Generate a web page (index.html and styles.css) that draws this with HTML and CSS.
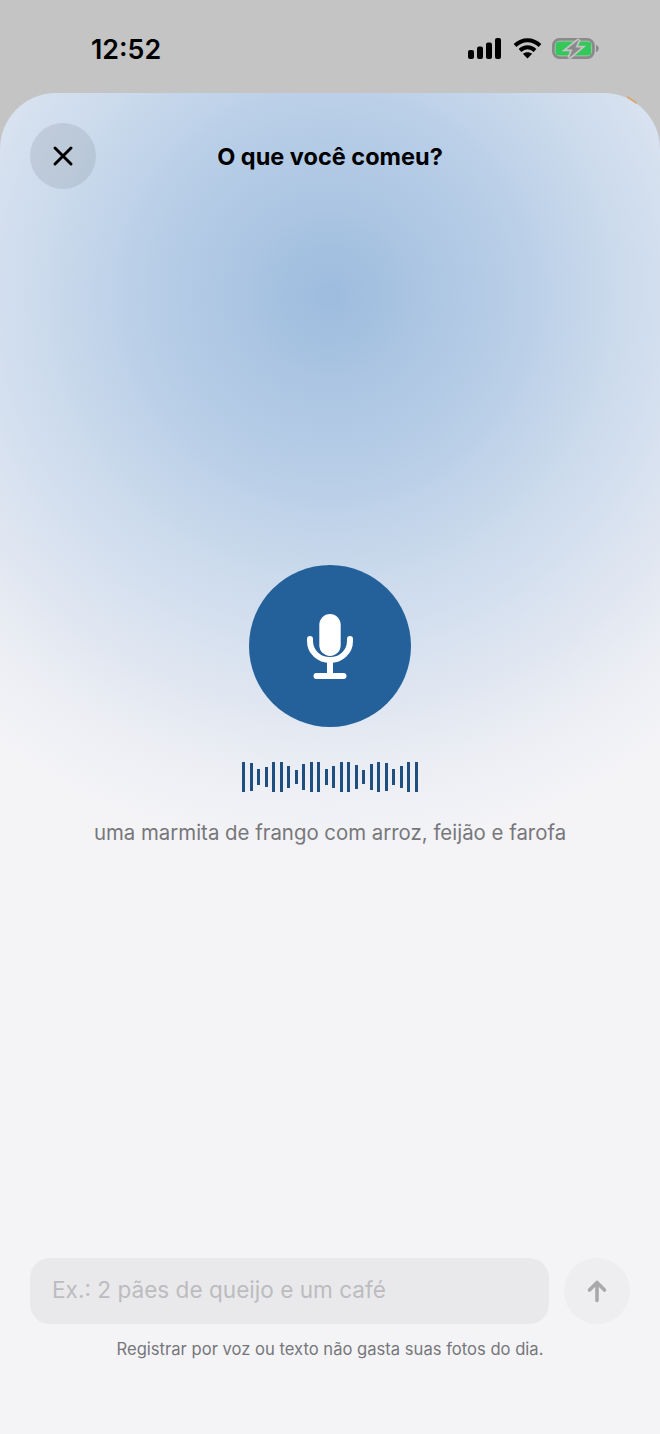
FILE: index.html
```html
<!DOCTYPE html>
<html lang="pt-BR">
<head>
    <meta charset="UTF-8">
    <meta name="viewport" content="width=device-width, initial-scale=1.0">
    <title>O que você comeu?</title>
    <link rel="stylesheet" href="styles.css">
</head>
<body>
    <div class="status-bar">
        <span class="time">12:52</span>
        <div class="status-icons">
            <svg class="icon-signal" width="34" height="21" viewBox="0 0 34 21">
                <rect x="0" y="12" width="6" height="9" rx="2" />
                <rect x="9" y="8.5" width="6" height="12.5" rx="2" />
                <rect x="18" y="4.5" width="6" height="16.5" rx="2" />
                <rect x="27" y="0" width="6" height="21" rx="2" />
            </svg>
            <svg class="icon-wifi" width="29" height="21" viewBox="0 0 29 21">
                <path d="M2 7.5C9.5 .5 19.5 .5 27 7.5" />
                <path d="M7 12.5C11.5 8.3 17.5 8.3 22 12.5" />
                <path class="wifi-dot" d="M14.5 20.5L9.8 15.8C12.5 13.6 16.5 13.6 19.2 15.8Z" />
            </svg>
            <svg class="icon-battery" width="47" height="21" viewBox="0 0 47 21">
                <rect class="batt-shell" x="1.400" y="1.400" width="40" height="18.200" rx="6" />
                <rect class="batt-fill" x="3.500" y="3.500" width="35.800" height="14" rx="3.500" />
                <path class="batt-nub" d="M44 7c2 .5 2.700 1.800 2.700 3.500S46 13.500 44 14Z" />
                <path class="batt-bolt" d="M27 1.500L14.500 11.500H20.500L17 20L29.500 9.500H23.500Z" />
            </svg>
        </div>
    </div>

    <main class="sheet">
        <span class="corner-sliver"></span>
        <header class="sheet-header">
            <button class="close-btn" aria-label="Fechar">
                <svg width="22" height="22" viewBox="0 0 22 22">
                    <path d="M3 3L19 19M19 3L3 19" />
                </svg>
            </button>
            <h1>O que você comeu?</h1>
        </header>

        <section class="voice">
            <div class="mic-circle">
                <svg width="48" height="66" viewBox="0 0 48 66">
                    <rect class="mic-body" x="13.300" y="1" width="21.400" height="42" rx="10.700" />
                    <path class="mic-line" d="M4 26V28C4 39 13 47 24 47S44 39 44 28V26M24 47V62M10.500 63H37.500" />
                </svg>
            </div>
            <div class="wave">
                <span class="b30"></span><span class="b28"></span><span class="b16"></span><span class="b20"></span>
                <span class="b30"></span><span class="b30"></span><span class="b22"></span><span class="b14"></span>
                <span class="b26"></span><span class="b30"></span><span class="b30"></span><span class="b16"></span>
                <span class="b22"></span><span class="b30"></span><span class="b30"></span><span class="b24"></span>
                <span class="b14"></span><span class="b26"></span><span class="b30"></span><span class="b28"></span>
                <span class="b16"></span><span class="b22"></span><span class="b30"></span><span class="b30"></span>
            </div>
            <p class="transcript">uma marmita de frango com arroz, feijão e farofa</p>
        </section>

        <footer class="composer">
            <div class="input-row">
                <div class="text-input">Ex.: 2 pães de queijo e um café</div>
                <button class="send-btn" aria-label="Enviar">
                    <svg width="22" height="24" viewBox="0 0 22 24">
                        <path d="M11 21.500V3.500M3.500 11L11 3.500L18.500 11" />
                    </svg>
                </button>
            </div>
            <p class="hint">Registrar por voz ou texto não gasta suas fotos do dia.</p>
        </footer>
    </main>
</body>
</html>
```

FILE: styles.css
```css
* {
    box-sizing: border-box;
}
html, body {
    height: 100%;
}
body {
    margin: 0;
    display: flex;
    flex-direction: column;
    min-height: 1434px;
    background-color: #c4c4c5;
    font-family: Inter, "Noto Sans", sans-serif;
    overflow: hidden;
}

/* status bar */
.status-bar {
    height: 93px;
    flex-shrink: 0;
    display: flex;
    justify-content: space-between;
    align-items: flex-start;
    padding: 38px 61px 0 91px;
}
.time {
    font-size: 26.800px;
    line-height: 22px;
    font-weight: 600;
    color: #000;
}
.status-icons {
    display: flex;
    gap: 10.500px;
    align-items: center;
}
.icon-signal {
    fill: #000;
}
.icon-wifi path {
    fill: none;
    stroke: #000;
    stroke-width: 4;
}
.icon-wifi .wifi-dot {
    fill: #000;
    stroke: none;
}
.batt-shell {
    fill: none;
    stroke: #8a8a8c;
    stroke-width: 2.800;
}
.batt-fill {
    fill: #34c759;
}
.batt-nub {
    fill: #8a8a8c;
}
.batt-bolt {
    fill: #8a8a8c;
    stroke: #c4c4c5;
    stroke-width: 3.500;
    paint-order: stroke;
}

/* sheet */
.sheet {
    position: relative;
    flex: 1;
    display: flex;
    flex-direction: column;
    border-radius: 56px 56px 0 0;
    background-color: #f4f4f7;
    background-image: radial-gradient(circle 560px at 330px 202px,
        #9dbcde 0%,
        #adc6e3 18%,
        #bbd0e8 36%,
        #cbdaec 51%,
        #d5e0ef 62%,
        #e4e9f2 78%,
        #eceef4 86%,
        #f4f4f7 100%);
}
.corner-sliver {
    position: absolute;
    top: 6px;
    right: 22px;
    width: 12px;
    height: 2px;
    border-radius: 1px;
    background-color: #d9a86c;
    transform: rotate(33deg);
}
.sheet-header {
    display: grid;
    grid-template-columns: 66px 1fr 66px;
    align-items: center;
    padding: 30px 30px 0;
}
.sheet-header h1 {
    margin: 0;
    text-align: center;
    font-size: 23.500px;
    font-weight: 700;
    color: #000;
}
.close-btn {
    width: 66px;
    height: 66px;
    border: none;
    border-radius: 50%;
    padding: 0;
    display: flex;
    align-items: center;
    justify-content: center;
    background-color: rgba(120, 130, 140, 0.2);
}
.close-btn path {
    fill: none;
    stroke: #000;
    stroke-width: 3;
    stroke-linecap: round;
}

/* voice area */
.voice {
    flex: 1;
    display: flex;
    flex-direction: column;
    align-items: center;
    padding-top: 376px;
}
.mic-circle {
    width: 162px;
    height: 162px;
    border-radius: 50%;
    background-color: #24619b;
    display: flex;
    align-items: center;
    justify-content: center;
}
.mic-body {
    fill: #fff;
}
.mic-line {
    fill: none;
    stroke: #fff;
    stroke-width: 6;
    stroke-linecap: round;
}
.wave {
    display: flex;
    align-items: center;
    gap: 4.500px;
    height: 32px;
    margin-top: 34px;
}
.wave span {
    width: 3px;
    background-color: #1f4f80;
}
.b30 { height: 30px; }
.b28 { height: 28px; }
.b26 { height: 26px; }
.b24 { height: 24px; }
.b22 { height: 22px; }
.b20 { height: 20px; }
.b16 { height: 16px; }
.b14 { height: 14px; }
.transcript {
    margin: 27px 0 0;
    font-size: 20.400px;
    line-height: 26px;
    color: #77777b;
}

/* composer */
.composer {
    padding: 0 30px 75px;
}
.input-row {
    display: flex;
    gap: 15px;
}
.text-input {
    flex: 1;
    height: 66px;
    border-radius: 20px;
    background-color: #e9e9eb;
    padding: 0 0 3px 22px;
    display: flex;
    align-items: center;
    font-size: 22.600px;
    color: #bcbcc0;
}
.send-btn {
    width: 66px;
    height: 66px;
    border: none;
    border-radius: 50%;
    padding: 0;
    display: flex;
    align-items: center;
    justify-content: center;
    background-color: #eeeef0;
}
.send-btn path {
    fill: none;
    stroke: #a9a9ac;
    stroke-width: 3.600;
    stroke-linecap: round;
    stroke-linejoin: round;
}
.hint {
    margin: 15px 0 0;
    text-align: center;
    font-size: 16.600px;
    line-height: 20px;
    color: #77777b;
}
```
